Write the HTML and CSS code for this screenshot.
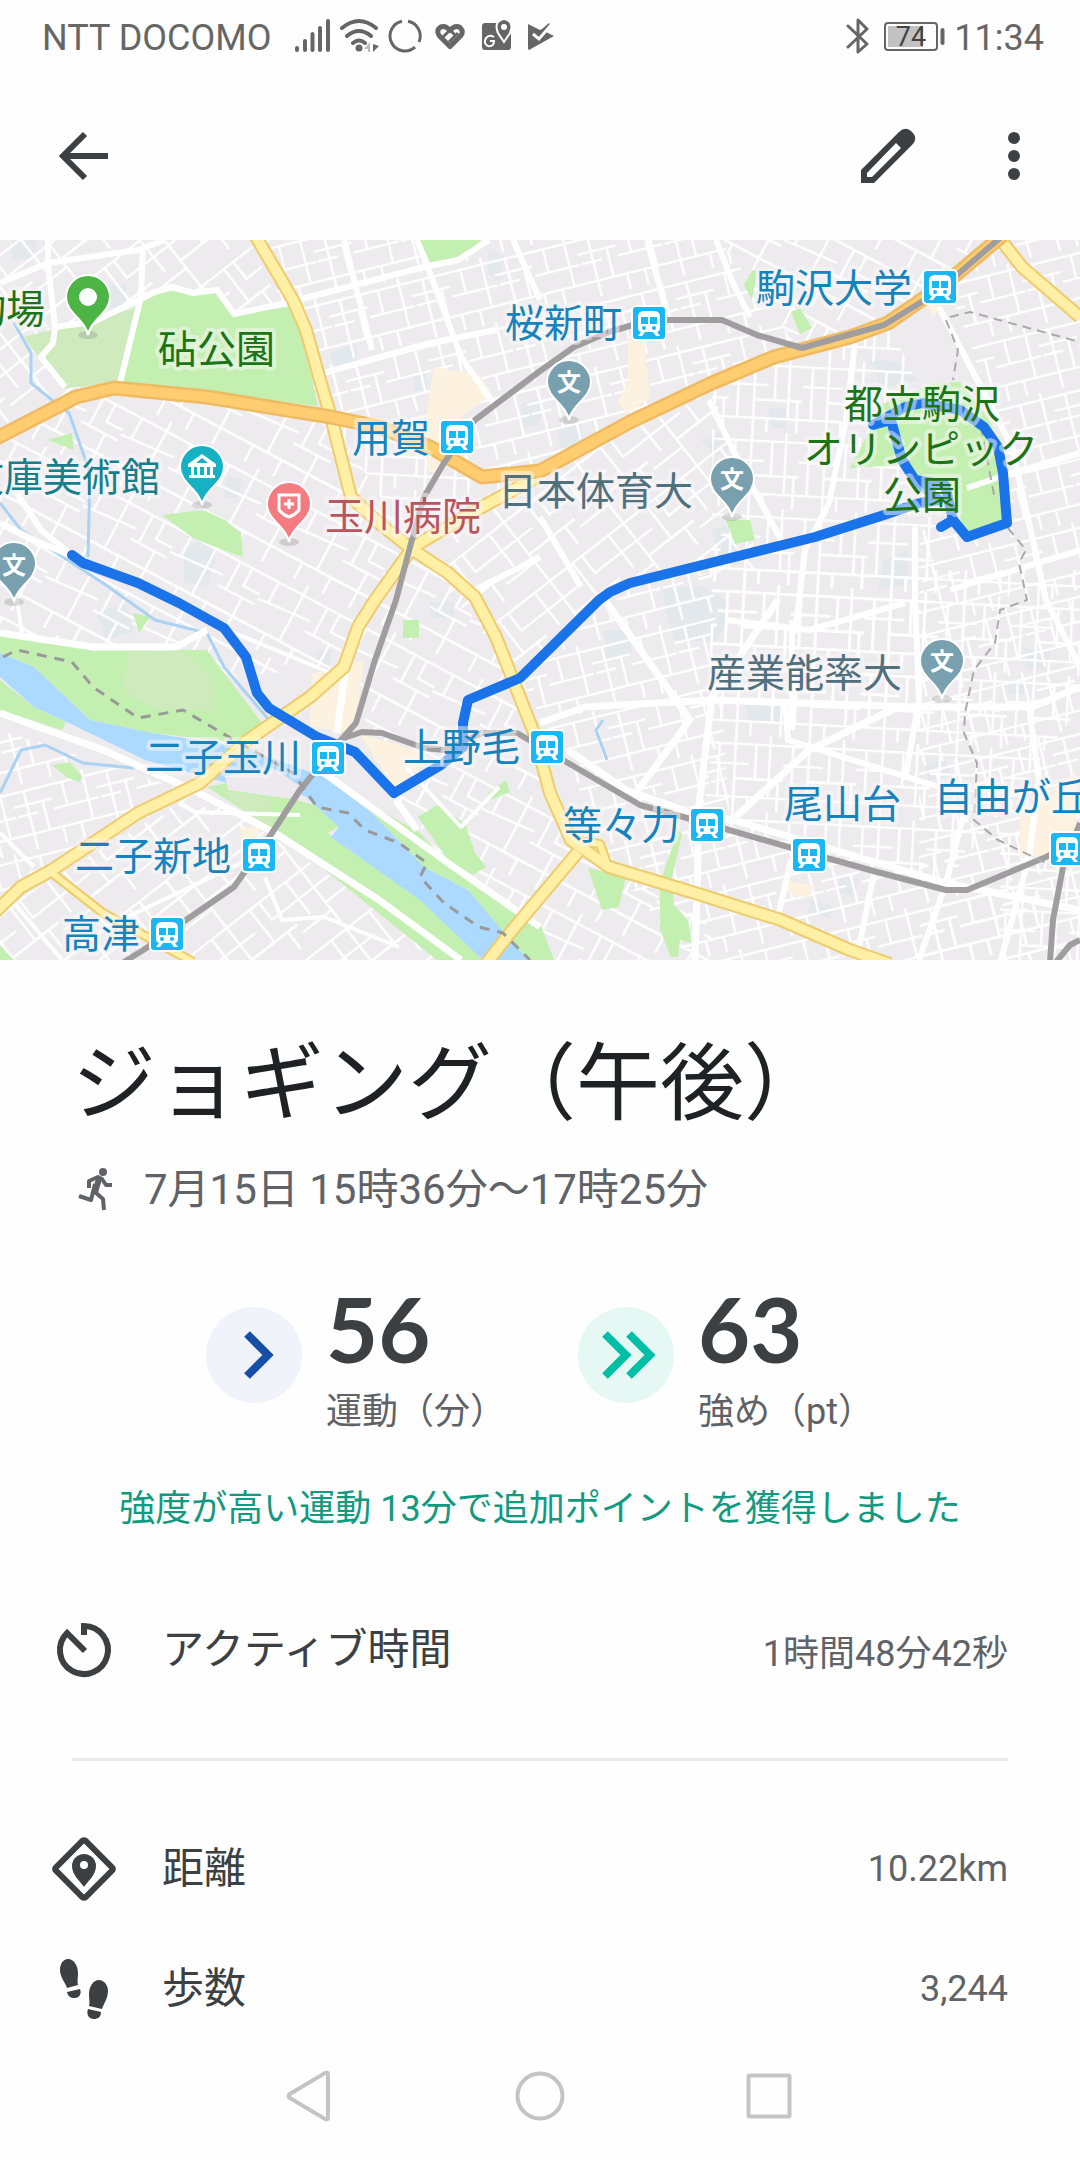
FILE: index.html
```html
<!DOCTYPE html>
<html lang="ja">
<head>
<meta charset="utf-8">
<meta name="viewport" content="width=device-width, initial-scale=1">
<title>ジョギング（午後）</title>
<link rel="stylesheet" href="styles.css">
</head>
<body>
<div class="screen">
  <div class="status">
    <span class="carrier">NTT DOCOMO</span>
    <svg class="status-icons" width="262" height="36" viewBox="295 18 262 36" fill="none" stroke="#666" aria-hidden="true">
      <path stroke-width="4" stroke-linecap="round" d="M297 48v2M305 41v9M312.500 34v16M320 28v22M328 21v29"/>
      <path stroke-width="4" stroke-linecap="round" d="M342 28q17-14 34 0M347 36q12-10 24 0M353 43q6-5 12 0"/>
      <circle cx="359" cy="48" r="3.500" fill="#666" stroke="none"/>
      <path fill="#bbb" stroke="none" d="M364 49l6-7v10h-2v-3z"/><path fill="#666" stroke="none" d="M373 44v8l6-6z"/>
      <path stroke-width="3" d="M402 21.300A15 15 0 1 0 415 47.200M408 21.300A15 15 0 0 1 419 42"/>
      <path stroke-width="5" stroke-linejoin="round" d="M450 46.500L439 35.500q-3-5 1-8 5-3 10 3 5-6 10-3 4 4 1 8z"/>
      <path stroke-width="3" d="M443 37l7-7 5 5M449 42l9-9"/>
      <path fill="#666" stroke="none" d="M485 23h26v24q0 3-3 3h-23q-3 0-3-3V26q0-3 3-3z"/>
      <path fill="#666" stroke="#fff" stroke-width="2" d="M504 42l-6-9q-3-7 0-11 6-6 12 0 3 4 0 11z"/>
      <circle cx="504" cy="27" r="3" fill="#fff" stroke="none"/>
      <path stroke="#fff" stroke-width="2" d="M494 37q-5-3-8 1-3 6 2 8 6 1 6-5h-4"/>
      <path fill="#666" stroke="none" d="M528 24l12 6 2-1 7-6 2 3-5 6 8 4-25 14q-1 0-1-2z"/>
      <path stroke="#fff" stroke-width="3" d="M533 34l6 5 12-14"/>
    </svg>
    <span class="grow"></span>
    <svg width="100" height="36" viewBox="846 18 100 36" fill="none" stroke="#666" aria-hidden="true">
      <path stroke-width="3" stroke-linejoin="round" stroke-linecap="round" d="M848 26l19 18-9 8V20l9 9-19 18"/>
      <rect x="885" y="23" width="52" height="27" rx="3" stroke-width="2"/>
      <path fill="#c2c2c2" stroke="none" d="M888 26h35v21h-35z"/>
      <path stroke-width="4" stroke-linecap="round" d="M942.500 30v13"/>
      <text class="battery" x="911" y="46" text-anchor="middle">74</text>
    </svg>
    <time class="clock">11:34</time>
  </div>

  <header class="toolbar">
    <button class="icon-button" aria-label="戻る">
      <svg width="60" height="60" viewBox="0 0 60 60" fill="none" stroke="#3c4043" stroke-width="6"><path d="M31 8L9 30l22 22M9 30h45"/></svg>
    </button>
    <span class="grow"></span>
    <button class="icon-button" aria-label="編集">
      <svg width="60" height="60" viewBox="858 126 60 60"><path fill="#3c4043" fill-rule="evenodd" d="M861 183v-13l38-38q6-6 12-1l2 2q5 6-1 12l-38 38zM867 177h5l29-29-5-5-29 30z"/></svg>
    </button>
    <button class="icon-button more" aria-label="その他">
      <svg width="60" height="60" viewBox="0 0 60 60" fill="#3c4043"><circle cx="30" cy="12" r="6"/><circle cx="30" cy="30" r="6"/><circle cx="30" cy="48" r="6"/></svg>
    </button>
  </header>

  <main>
    <svg class="map" viewBox="0 0 1080 720" role="img" aria-label="ルートの地図">
      <defs>
        <pattern id="st1" width="74" height="58" patternUnits="userSpaceOnUse" patternTransform="rotate(-14) scale(1.15)">
          <path class="street" d="M0 6H74M0 27H40M40 18H74M0 44H74M12 6V27M31 0V44M52 6V58M66 18V44M20 44V58M4 44V58M42 27H60"/>
        </pattern>
        <pattern id="st2" width="86" height="70" patternUnits="userSpaceOnUse" patternTransform="rotate(28) scale(1.15)">
          <path class="street" d="M0 9H86M0 30L50 26M50 36H86M0 54H86M10 9V30M34 0V54M58 9V36M74 36V70M20 54V70M48 54V70M70 9V26H86"/>
        </pattern>
        <pattern id="st3" width="64" height="66" patternUnits="userSpaceOnUse" patternTransform="rotate(3) scale(1.15)">
          <path class="street" d="M0 8H64M0 25H34M22 38H64M0 54H64M8 8V54M22 0V66M40 8V38M52 0V54M60 38V66M34 54V66"/>
        </pattern>
        <pattern id="st4" width="78" height="62" patternUnits="userSpaceOnUse" patternTransform="rotate(-38) scale(1.2)">
          <path class="street" d="M0 10H78M0 28H46M30 44H78M14 10V44M30 0V62M54 10V44M68 44V62M0 52H30M64 10V28H78"/>
        </pattern>
        <g id="train">
          <rect x="-18" y="-18" width="36" height="36" rx="5" fill="#fff"/>
          <rect x="-16" y="-16" width="32" height="32" rx="3" fill="#19b8f5"/>
          <path fill="#fff" d="M-11-6q0-6 6-6H5q6 0 6 6V5q0 3-3 4l3 4H7L4 9h-8l-3 4h-4l3-4q-3-1-3-4z"/>
          <path fill="#19b8f5" d="M-8-6h7v7h-7zM1-6h7v7H1z"/>
          <circle cx="-5" cy="5" r="2" fill="#19b8f5"/><circle cx="5" cy="5" r="2" fill="#19b8f5"/>
        </g>
        <g id="pin">
          <ellipse cx="0" cy="0" rx="10" ry="4" fill="#888" opacity=".3"/>
          <path stroke="#fff" stroke-width="2" d="M0 0C-3-16-22-22-22-38a22 22 0 0 1 44 0C22-22 3-16 0 0z"/>
        </g>
      </defs>

      <rect width="1080" height="720" fill="#eeebef"/>

      <g fill="#e3e8ed">
        <path d="M12 0h24l-2 18-22 2zM330 112l26-8 2 18-24 6zM413 136l14-3v18h-12zM108 45h18v24h-16zM184 310l20-12 12 16-8 34-24-6zM226 238h16l-4 20h-14zM520 165l20-8v26l-16 6zM488 10l16 6-4 26-12-8z"/>
        <path d="M557 186h24l3 18-24 4zM768 168h18v20h-14zM700 200l20-8 12 18-16 6zM712 290l14-4 16 28-22 4zM868 118l30 4 20 18-36 8zM662 348l40-2 24 14v26l-12 16-40-2-8-30zM884 320l24-10v34l-30 6zM604 390h24l4 22-26 8zM745 465h36v18h-32zM925 525l20-6 6 16-22 6zM840 635l18 4-4 18-16-4zM810 660l24 6-4 12-22-6zM96 372l30-8 8 28-28 8zM430 362h24v16h-24zM316 410h16l-4 24-14-4zM1024 408l26 4-4 18-20-2zM1008 440h16v14h-16z"/>
      </g>
      <g>
        <path fill="url(#st4)" d="M0 0H250L330 177 115 148 0 195z"/>
        <path fill="url(#st1)" d="M255 0H720L800 110 640 175 540 235 482 237 331 177z"/>
        <path fill="url(#st2)" d="M0 195L115 148 331 177 413 310 344 427 227 437 0 393z"/>
        <path fill="url(#st3)" d="M331 177L482 237 540 235 413 310z"/>
        <path fill="url(#st4)" d="M413 310L540 235 712 143 760 330 630 343 520 438z"/>
        <path fill="url(#st2)" d="M344 427L413 310 475 360 540 503 571 600 489 720H470L396 553z"/>
        <path fill="url(#st3)" d="M712 143L888 83 946 200 919 467H712z"/>
        <path fill="url(#st2)" d="M716 0H1000L888 83 800 108zM571 600L695 653 720 720H489z"/>
        <path fill="url(#st1)" d="M950 50L1000 0H1080V720H919V290L1005 285V200zM520 440L630 343 712 330 730 583 568 523z"/>
        <path fill="url(#st3)" d="M712 330H1080V467L946 643 705 583zM1000 560H1080V720H1000z"/>
        <path fill="url(#st1)" d="M609 620L568 523 740 590 1050 660V720H690z"/>
        <path fill="url(#st1)" d="M0 490L193 553 0 660z"/>
        <path fill="url(#st4)" d="M0 670L200 550 275 600 460 720H0z"/>
      </g>

      <g fill="#fdf2df">
        <path d="M434 127l46 8 12 20-30 20-20 60-14-4-4-40zM628 98h16l6 60-24 16-8-12 10-20zM312 434l52-14-10 74-44-8zM360 494l64 18 4 10-34 26zM1020 572l56-40v84h-56zM785 640l30 6-8 12-24-6zM925 60l16 4-8 14zM240 588l20-2-4 20-14 4z"/>
      </g>

      <g fill="#c3efb1">
        <path d="M24 97L131 70 158 50 193 53 217 52 234 75 289 67 303 100 318 166 114 143 65 148 41 120z"/>
        <path d="M420 0H482L458 19 430 22z"/>
        <path d="M162 275L203 270 225 280 241 293 243 317 228 312 193 298z"/>
        <path d="M48 200L72 193 74 210z"/>
        <path d="M744 45L752 30 757 32 752 60zM791 72L800 68 812 88 800 94z"/>
        <path d="M726 280H750L755 300 735 304z"/>
        <path d="M880 165L935 143 960 142 990 180 1005 230 1010 285 965 292 953 255 900 225 850 228 870 190z"/>
        <path d="M588 628L626 637 619 667 602 670zM678 590L660 643V690L671 717H678L680 700 692 703 688 680 674 665 672 637 682 594z"/>
        <path d="M0 393L103 410 207 410 227 437 262 483 241 503 152 493 90 480 34 427 0 413z"/>
        <path d="M0 440L34 467 66 482 62 490 0 470zM207 547L241 540 286 557 331 570 339 587 327 593 420 655 482 720H437L279 593z"/>
        <path d="M324 537L420 593 448 623 540 683 556 725H520L468 650 424 627 372 573z"/>
        <path d="M418 577L437 565 465 583 475 613 486 627 473 635 448 620z"/>
        <path d="M52 525L70 522 82 536 80 542 68 538zM488 553L506 540 510 552 490 560zM133 373L150 377 139 393zM403 380h16v18h-16zM0 706l14 14H0z"/>
      </g>
      <g fill="#cfebbe">
        <path d="M24 97L136 68 120 143 65 148 41 120zM130 410L185 412 215 440 214 470 160 470 122 450zM220 550l50 8 4 28-20-8z"/>
      </g>
      <path fill="#acd9ff" d="M0 413L34 427 90 480 152 493 241 507 324 537 372 573 424 627 468 650 532 725H488L420 660 331 597 339 587 306 557 286 547 227 543 145 520 69 483 34 467 0 437z"/>
      <path fill="#eee9ee" d="M225 536l48-8 30 20-5 12-70-10z"/>
      <path fill="none" stroke="#a9d2f3" stroke-width="3" d="M14 83L31 113V143L52 160 69 173 90 233 88 317M0 263L21 290 103 343 127 360 155 380 207 393 224 427 269 480M0 553L21 510 45 505 83 523 134 528M603 480L596 490 607 520"/>

      <g fill="none" stroke="#fff" stroke-width="6" stroke-linejoin="round">
        <path d="M0 43L48 23 138 10 165 0M48 0V23L55 87 53 103 41 117 65 147M143 7L141 57 120 143M55 87L93 82 155 52 172 47 193 53 217 50 234 74 286 63 424 27 458 20 489 0M417 0L430 33 461 117 496 167M344 0L372 110M513 0L540 60M324 133L430 103 496 90M17 253L41 290 69 313M0 283L34 300 69 315M475 350L540 317"/>
        <path d="M647 0L667 73M716 0L733 43 750 77M709 160L733 210 781 300M855 103L846 180 829 263 805 310 795 393M939 67L984 153 1012 207 1029 283 1046 360 1080 427M967 248L1012 233 1080 213M915 287V360L919 460 905 540M540 277L581 347M950 350L1080 310"/>
        <path stroke-width="7" d="M540 483L585 467 712 460 919 467H1032L1080 447M605 360L688 477M692 477L633 557M568 510L626 550 692 573 733 580 946 643 1080 670M729 583L809 510 898 467M778 360L712 457 698 573 698 620 695 720"/>
        <path d="M726 380L809 390 905 363M785 460L788 500 939 547M1029 467L1039 540 1029 617 1001 720M791 620L778 677M874 633L857 717M964 573L946 643 919 720M792 380V490"/>
        <path stroke-width="7" d="M0 473L103 510 193 550 275 593 379 660 461 720M324 533L393 583 448 623 540 687M348 410L337 493M396 560L417 590M0 393L93 407 176 407 207 390"/>
        <path stroke-width="4" d="M227 390L331 433M406 527L461 587 499 547M0 593L34 627M14 663L62 720M265 637L282 680 324 677 399 707M127 677L241 623M17 360L22 393M179 563L195 572 300 575"/>
      </g>

      <g fill="none" stroke-linejoin="round">
        <path class="road-edge" d="M255-5L293 60 306 90 320 140 331 177 341 217 351 257 379 283 413 310 448 333 475 357 496 397 517 450 534 493 550 553 571 600 609 627 695 653 781 680 850 710 890 724M578 612L540 657 510 693 485 725M537 237L482 267 413 307 375 360 358 387 344 427 310 457 248 500 200 543 138 573 52 630 21 647-5 672M1001 0L1022 27 1080 77"/>
        <path class="road-edge thin" d="M52 633L103 673 193 722M571 600L600 604 608 626"/>
        <path class="road" d="M255-5L293 60 306 90 320 140 331 177 341 217 351 257 379 283 413 310 448 333 475 357 496 397 517 450 534 493 550 553 571 600 609 627 695 653 781 680 850 710 890 724M578 612L540 657 510 693 485 725M537 237L482 267 413 307 375 360 358 387 344 427 310 457 248 500 200 543 138 573 52 630 21 647-5 672M1001 0L1022 27 1080 77"/>
        <path class="road thin" d="M52 633L103 673 193 722M571 600L600 604 608 626"/>
        <path stroke="#eebb62" stroke-width="15" d="M-5 199L76 157 114 148 207 157 331 177 379 187 430 207 482 237 540 231 630 182 712 143 774 117 850 97 888 83 946 43 1003-5"/>
        <path stroke="#ffcc70" stroke-width="10" d="M-5 199L76 157 114 148 207 157 331 177 379 187 430 207 482 237 540 231 630 182 712 143 774 117 850 97 888 83 946 43 1003-5"/>
        <path stroke="#a09d9f" stroke-width="6" d="M1001-3L936 53 884 85 802 108 757 95 722 80H650L609 92 574 107 540 131 475 180 444 223 424 257 410 307 396 360 375 420 356 483 341 500 300 550 272 593 234 647 186 680 148 707 124 722M344 498L362 492 382 493 424 508 444 510 482 493H517L568 523 640 565 705 583 809 613 877 632 946 650H967L1046 617 1076 600M1080 583L1063 627 1053 680 1050 722M1056 722L1070 705 1080 700"/>
        <path stroke="#999" stroke-width="3" stroke-dasharray="10 8" d="M3 417L17 410 72 422 93 447 138 478 183 470 234 500 293 533 317 567 348 573 365 590 399 603 427 623 420 637 444 663 479 687 503 693 530 720"/>
        <path stroke="#aaa" stroke-width="2" stroke-dasharray="9 6" d="M950 77L970 72 1080 102M946 80L958 110 953 140M981 187L995 260M1008 288L1026 310 1019 323 1027 360 1000 370 995 403 974 430 965 473 964 493 977 523 974 580 998 600 1046 623"/>
        <path stroke="#1a73e8" stroke-width="10" stroke-linecap="round" d="M72 315L83 323 138 343 179 363 224 388 246 417 257 453 269 468 317 497 355 512 394 553 441 525 463 507V483L468 460 520 438 599 360 610 352 630 343 815 297 884 275 919 263 939 260 915 240 902 220 891 180 873 185 905 167 922 163 960 170 984 187 998 207 1003 233 1007 283 967 297 953 280 945 245 915 240M953 280L941 287"/>
      </g>

      <use href="#pin" x="88" y="95" fill="#4db546"/><circle cx="88" cy="57" r="9" fill="#fff"/>
      <use href="#pin" x="202" y="265" fill="#17b1c4"/>
      <path fill="#fff" fill-rule="evenodd" d="M188 224l14-10 14 10v3h-28zM196 223h12l-6-5zM189 235h26v3h-26zM191 227h3v8h-3zM197 227h3v8h-3zM204 227h3v8h-3zM210 227h3v8h-3z"/>
      <use href="#pin" x="289" y="302" fill="#f47c80"/>
      <path fill="none" stroke="#fff" stroke-width="3" d="M279 255h20v15q-4 5-10 7-6-2-10-7zM289 259v10M284 264h10"/>
      <use href="#pin" x="14" y="362" fill="#78a0af"/>
      <use href="#pin" x="569" y="180" fill="#78a0af"/>
      <use href="#pin" x="732" y="277" fill="#78a0af"/>
      <use href="#pin" x="942" y="459" fill="#78a0af"/>
      <g class="school"><text x="14" y="334">文</text><text x="569" y="151">文</text><text x="732" y="248">文</text><text x="942" y="430">文</text></g>

      <g class="label station">
        <text x="756" y="62">駒沢大学</text><text x="505" y="97">桜新町</text><text x="352" y="212">用賀</text>
        <text x="145" y="531">二子玉川</text><text x="403" y="521">上野毛</text><text x="75" y="630">二子新地</text>
        <text x="62" y="708">高津</text><text x="563" y="599">等々力</text><text x="784" y="578">尾山台</text><text x="934" y="571">自由が丘</text>
      </g>
      <g class="label park">
        <text x="158" y="123">砧公園</text><text x="45" y="83" text-anchor="end">釣場</text>
        <text x="922" y="178" text-anchor="middle">都立駒沢</text><text x="921" y="223" text-anchor="middle">オリンピック</text><text x="922" y="269" text-anchor="middle">公園</text>
      </g>
      <text class="label museum" x="160" y="251" text-anchor="end">文庫美術館</text>
      <text class="label hospital" x="325" y="290">玉川病院</text>
      <text class="label campus" x="498" y="265">日本体育大</text>
      <text class="label campus" x="707" y="447">産業能率大</text>

      <use href="#train" x="940" y="47"/><use href="#train" x="649" y="83"/><use href="#train" x="457" y="197"/>
      <use href="#train" x="328" y="518"/><use href="#train" x="259" y="615"/><use href="#train" x="167" y="694"/>
      <use href="#train" x="547" y="507"/><use href="#train" x="707" y="585"/><use href="#train" x="809" y="615"/><use href="#train" x="1067" y="609"/>
    </svg>

    <section class="summary">
      <h1>ジョギング（午後）</h1>
      <p class="when">
        <svg width="48" height="48" viewBox="72 1164 48 48" fill="none" stroke="#5f6368" stroke-width="4" stroke-linejoin="round" aria-hidden="true"><circle cx="103" cy="1170" r="4" fill="#5f6368" stroke="none"/><path d="M89 1186v-7l9-4 4 2 4 6h6M79 1194l12 4 4-16M95 1190l8 7 1 11"/><path stroke-width="6" d="M99 1177l-4 13"/></svg>
        <span>7月15日 15時36分～17時25分</span>
      </p>
      <div class="stats">
        <div class="stat">
          <svg width="96" height="96" viewBox="0 0 96 96" aria-hidden="true"><circle cx="48" cy="48" r="48" fill="#f0f4fa"/><path fill="none" stroke="#174ea6" stroke-width="8" d="M41 27l21 21-21 21"/></svg>
          <div><strong>56</strong><span>運動（分）</span></div>
        </div>
        <div class="stat">
          <svg width="96" height="96" viewBox="0 0 96 96" aria-hidden="true"><circle cx="48" cy="48" r="48" fill="#e6f8f4"/><path fill="none" stroke="#00bfa5" stroke-width="8" d="M27 27l21 21-21 21M51 27l21 21-21 21"/></svg>
          <div><strong>63</strong><span>強め（pt）</span></div>
        </div>
      </div>
      <p class="bonus">強度が高い運動 13分で追加ポイントを獲得しました</p>
    </section>

    <dl class="details">
      <div class="row">
        <dt><svg width="72" height="72" viewBox="48 1616 72 72" fill="none" stroke="#3c4043" stroke-width="6" aria-hidden="true"><path d="M84 1637v-9a24 24 0 1 1-17 7l18 18"/></svg><span>アクティブ時間</span></dt>
        <dd>1時間48分42秒</dd>
      </div>
      <div class="row ruled">
        <dt><svg width="72" height="72" viewBox="48 1835 72 72" aria-hidden="true"><rect x="63" y="1850" width="42" height="42" rx="2" transform="rotate(45 84 1871)" fill="none" stroke="#3c4043" stroke-width="6"/><path fill="#3c4043" fill-rule="evenodd" d="M84 1889c-4-6-12-12-12-21a12 12 0 0 1 24 0c0 9-8 15-12 21zM84 1863a4 4 0 1 0 0 8 4 4 0 0 0 0-8z"/></svg><span>距離</span></dt>
        <dd>10.22km</dd>
      </div>
      <div class="row">
        <dt><svg width="72" height="72" viewBox="48 1955 72 72" fill="#3c4043" aria-hidden="true"><path d="M68 1961c6 0 10 7 10 14 0 5-1 8 0 12l-11 3c-2-6-7-11-7-18 0-6 3-11 8-11zM67 1994l13-3c2 5-1 9-5 9-5 0-7-2-8-6z"/><path d="M99 1982c-6 0-10 7-10 14 0 5 1 8 0 12l13 3c2-6 6-11 6-18 0-6-4-11-9-11zM88 2011l13 3c0 5-3 7-7 7-5 0-8-4-6-10z"/></svg><span>歩数</span></dt>
        <dd>3,244</dd>
      </div>
    </dl>
  </main>

  <nav class="system-nav" aria-label="システム">
    <button class="icon-button" aria-label="戻る"><svg width="60" height="60" viewBox="279 2066 60 60"><path d="M289 2094.500L325 2073q3-1 3 1v44q0 2-3 1l-36-21.500q-1-1.500 0-3z"/></svg></button>
    <button class="icon-button" aria-label="ホーム"><svg width="60" height="60" viewBox="510 2066 60 60"><circle cx="540" cy="2096" r="22.500"/></svg></button>
    <button class="icon-button" aria-label="履歴"><svg width="60" height="60" viewBox="741 2066 60 60"><rect x="748.500" y="2075.500" width="41" height="41" rx="1"/></svg></button>
  </nav>
</div>
</body>
</html>
```
FILE: styles.css
```css
* { box-sizing: border-box; }

body {
  margin: 0;
  background: #fefefe;
  color: #3c4043;
  font-family: Roboto, "Noto Sans CJK JP", sans-serif;
}

.screen {
  display: flex;
  flex-direction: column;
  min-height: 100vh;
}

.grow { flex: 1; }

/* Status bar */
.status {
  display: flex;
  align-items: center;
  height: 72px;
  padding: 0 36px 0 42px;
  color: #666;
  font-size: 36px;
  line-height: 72px;
}
.carrier, .clock { padding-top: 4px; }
.status-icons { margin-left: 24px; }
.clock { margin-left: 8px; }
.battery {
  font-size: 27px;
  fill: #444;
  stroke: none;
}

/* App bar */
.toolbar {
  display: flex;
  align-items: center;
  height: 168px;
  padding: 0 36px 0 54px;
}
.icon-button {
  display: block;
  padding: 0;
  border: 0;
  background: none;
}
.icon-button svg { display: block; }
.more { margin-left: 66px; }

/* Map */
.map {
  display: block;
  width: 100%;
  aspect-ratio: 3 / 2;
}
.street { fill: none; stroke: #fff; stroke-width: 2; }
.road-edge { stroke: #eecb6c; stroke-width: 14; }
.road { stroke: #fff0a5; stroke-width: 10; }
.road-edge.thin { stroke-width: 10; }
.road.thin { stroke-width: 6; }
.label {
  font: 39px "Noto Sans CJK JP", sans-serif;
  paint-order: stroke;
  stroke: rgba(250, 248, 250, .5);
  stroke-width: 8px;
  stroke-linejoin: round;
}
.station { fill: #1583bd; }
.park { fill: #1b7416; }
.museum { fill: #167f8b; }
.hospital { fill: #b9555c; }
.campus { fill: #50707e; }
.school {
  font: 700 24px "Noto Sans CJK JP", sans-serif;
  fill: #fff;
  text-anchor: middle;
}

/* Summary */
.summary { padding: 63px 72px 0; }
h1 {
  margin: 0;
  color: #202124;
  font-size: 84px;
  font-weight: 400;
  line-height: 124px;
}
.when {
  display: flex;
  align-items: center;
  gap: 24px;
  margin: 10px 0 0;
  color: #5f6368;
  font-size: 42px;
  line-height: 66px;
}
.stats {
  display: flex;
  justify-content: center;
  gap: 72px;
  margin-top: 57px;
}
.stat { display: flex; gap: 24px; }
.stat > svg { margin-top: 27px; }
.stat strong {
  display: block;
  font: 700 90px/96px Lato, sans-serif;
}
.stat span {
  display: block;
  margin-top: 9px;
  color: #5f6368;
  font-size: 36px;
  line-height: 54px;
}
.bonus {
  margin: 43px 0 0;
  color: #129a80;
  font-size: 36px;
  line-height: 54px;
  text-align: center;
}

/* Details */
.details { margin: 54px 72px 0; }
.row {
  display: flex;
  align-items: center;
  justify-content: space-between;
  height: 120px;
}
.row dt {
  display: flex;
  align-items: center;
  gap: 42px;
  margin-left: -24px;
  font-size: 42px;
}
.row dt span { padding-bottom: 9px; }
.row dd {
  margin: 0;
  color: #5f6368;
  font-size: 36px;
}
.ruled {
  height: 171px;
  margin-top: 48px;
  padding-top: 48px;
  border-top: 3px solid #e8eaed;
}

/* System navigation */
.system-nav {
  display: flex;
  align-items: center;
  justify-content: center;
  gap: 171px;
  height: 108px;
  margin-top: auto;
  padding-bottom: 20px;
}
.system-nav svg {
  fill: none;
  stroke: #c4c4c4;
  stroke-width: 4;
}
```
